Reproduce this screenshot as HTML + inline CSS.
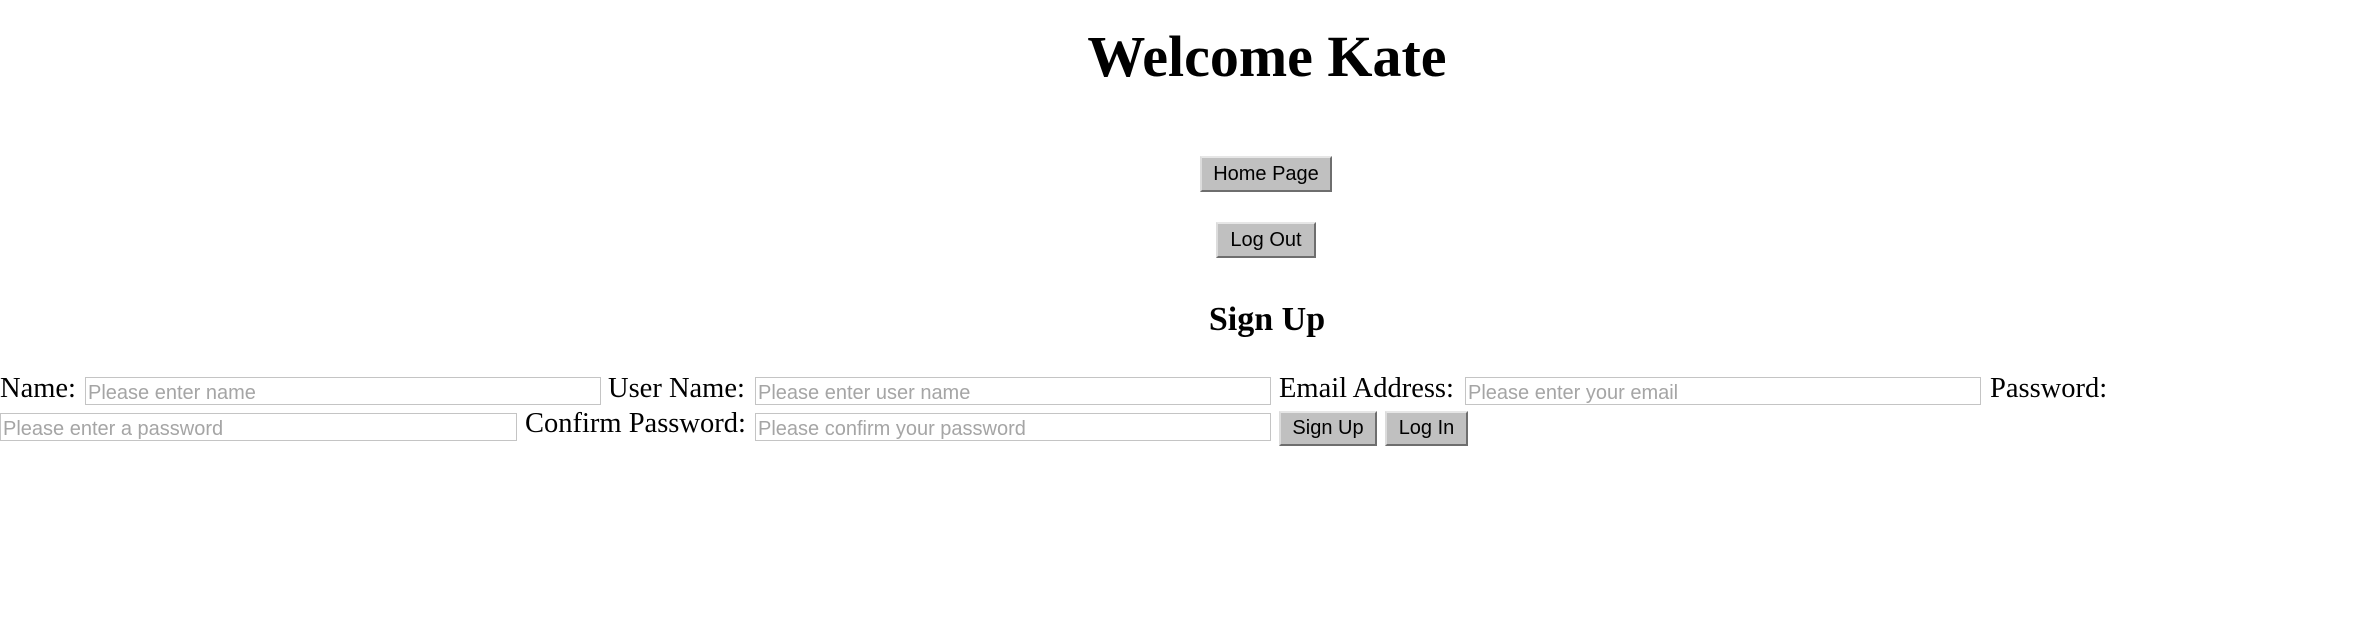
<!DOCTYPE html>
<html><head><meta charset="utf-8"><style>
html,body{margin:0;padding:0;width:2378px;height:620px;background:#fff;overflow:hidden;position:relative}
.t{position:absolute;white-space:nowrap;line-height:normal;font-family:"Liberation Serif",serif;color:#000}
.c{left:0;width:2534px;text-align:center}
.in{position:absolute;box-sizing:border-box;border:1px solid #c4c4c4;height:28px;background:#fff}
.ph{position:absolute;left:2px;top:4px;font:20px/normal "Liberation Sans",sans-serif;color:#a5a5a5;white-space:nowrap}
.b{position:absolute;box-sizing:border-box;height:36px;background:#c0c0c0;border:2px solid;border-color:#e6e6e6 #6e6e6e #6e6e6e #dcdcdc;font:20px "Liberation Sans",sans-serif;color:#000;display:flex;align-items:center;justify-content:center}
</style></head><body>
<div class="t c" style="top:23px;font-size:58px;font-weight:bold">Welcome Kate</div>
<div class="b" style="left:1200px;top:156px;width:132px">Home Page</div>
<div class="b" style="left:1216px;top:222px;width:100px">Log Out</div>
<div class="t c" style="top:301px;font-size:34px;font-weight:bold">Sign Up</div>

<div class="t" style="left:0;top:373px;font-size:28.5px">Name:</div>
<div class="in" style="left:85px;top:377px;width:516px"><span class="ph">Please enter name</span></div>
<div class="t" style="left:608px;top:373px;font-size:28.5px">User Name:</div>
<div class="in" style="left:755px;top:377px;width:516px"><span class="ph">Please enter user name</span></div>
<div class="t" style="left:1279px;top:373px;font-size:28.5px">Email Address:</div>
<div class="in" style="left:1465px;top:377px;width:516px"><span class="ph">Please enter your email</span></div>
<div class="t" style="left:1990px;top:373px;font-size:28.5px">Password:</div>

<div class="in" style="left:0;top:413px;width:517px"><span class="ph">Please enter a password</span></div>
<div class="t" style="left:525px;top:408px;font-size:28.5px">Confirm Password:</div>
<div class="in" style="left:755px;top:413px;width:516px"><span class="ph">Please confirm your password</span></div>
<div class="b" style="left:1279px;top:411px;width:98px;height:35px">Sign Up</div>
<div class="b" style="left:1385px;top:411px;width:83px;height:35px">Log In</div>
</body></html>
